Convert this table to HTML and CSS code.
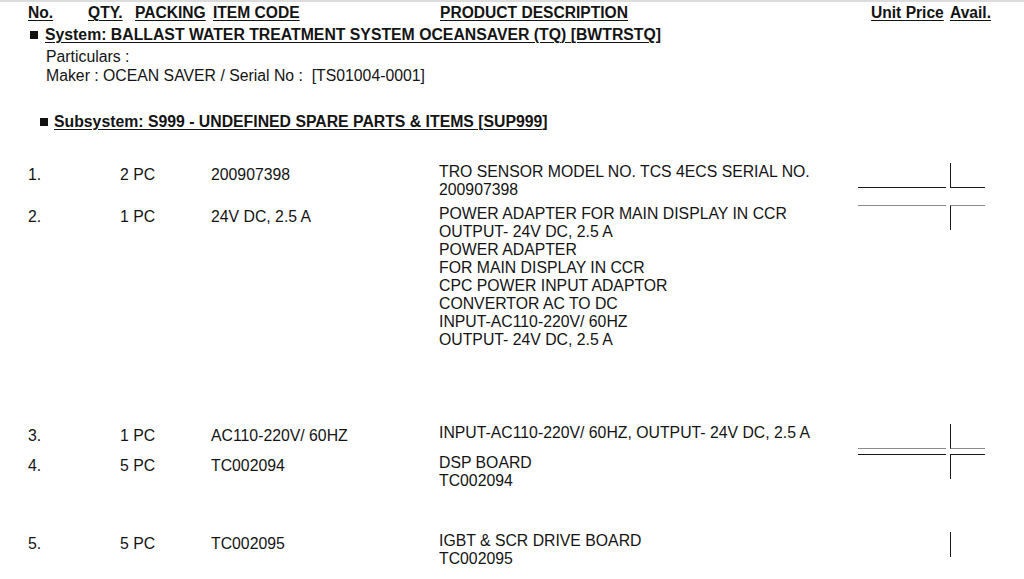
FILE: index.html
```html
<!DOCTYPE html>
<html lang="en">
<head>
<meta charset="utf-8">
<title>Spare Parts List</title>
<link rel="stylesheet" href="styles.css">
</head>
<body>
<div class="page">
  <div class="head">
    <span class="h-no"><u>No.</u></span>
    <span class="h-qty"><u>QTY.</u></span>
    <span class="h-pack"><u>PACKING</u></span>
    <span class="h-code"><u>ITEM CODE</u></span>
    <span class="h-desc"><u>PRODUCT DESCRIPTION</u></span>
    <span class="h-price"><u>Unit Price</u></span>
    <span class="h-avail"><u>Avail.</u></span>
  </div>

  <div class="system"><span class="sq"></span><u>System: BALLAST WATER TREATMENT SYSTEM OCEANSAVER (TQ) [BWTRSTQ]</u></div>
  <div class="particulars">
    <div>Particulars :</div>
    <div>Maker : OCEAN SAVER / Serial No :&nbsp; [TS01004-0001]</div>
  </div>

  <div class="subsystem"><span class="sq"></span><u>Subsystem: S999 - UNDEFINED SPARE PARTS &amp; ITEMS [SUP999]</u></div>

  <div class="items">
    <div class="item item-first">
      <div class="c-no">1.</div>
      <div class="c-qty">2 PC</div>
      <div class="c-code">200907398</div>
      <div class="c-desc">TRO SENSOR MODEL NO. TCS 4ECS SERIAL NO.<br>200907398</div>
      <div class="c-price bb-dark"></div>
      <div class="c-avail bb-dark"></div>
    </div>
    <div class="item gap-4">
      <div class="c-no">2.</div>
      <div class="c-qty">1 PC</div>
      <div class="c-code">24V DC, 2.5 A</div>
      <div class="c-desc">POWER ADAPTER FOR MAIN DISPLAY IN CCR<br>OUTPUT- 24V DC, 2.5 A<br>POWER ADAPTER<br>FOR MAIN DISPLAY IN CCR<br>CPC POWER INPUT ADAPTOR<br>CONVERTOR AC TO DC<br>INPUT-AC110-220V/ 60HZ<br>OUTPUT- 24V DC, 2.5 A</div>
      <div class="c-price bt-gray"></div>
      <div class="c-avail bt-gray"></div>
    </div>
    <div class="item">
      <div class="c-no">3.</div>
      <div class="c-qty">1 PC</div>
      <div class="c-code">AC110-220V/ 60HZ</div>
      <div class="c-desc">INPUT-AC110-220V/ 60HZ, OUTPUT- 24V DC, 2.5 A</div>
      <div class="c-price bb-gray"></div>
      <div class="c-avail bb-gray"></div>
    </div>
    <div class="item gap-2">
      <div class="c-no">4.</div>
      <div class="c-qty">5 PC</div>
      <div class="c-code">TC002094</div>
      <div class="c-desc">DSP BOARD<br>TC002094</div>
      <div class="c-price bt-dark"></div>
      <div class="c-avail bt-dark"></div>
    </div>
    <div class="item">
      <div class="c-no">5.</div>
      <div class="c-qty">5 PC</div>
      <div class="c-code">TC002095</div>
      <div class="c-desc">IGBT &amp; SCR DRIVE BOARD<br>TC002095</div>
      <div class="c-price"></div>
      <div class="c-avail"></div>
    </div>
  </div>
</div>
</body>
</html>
```

FILE: styles.css
```css
html, body {
  margin: 0;
  padding: 0;
  background: #ffffff;
}

body {
  font-family: "Liberation Sans", Arial, sans-serif;
  font-size: 15.8px;
  line-height: 18px;
  color: #141414;
}

.page {
  border-top: 2px solid #dcdcdc;
  width: 1024px;
  height: 577px;
  overflow: hidden;
}

u {
  text-decoration: underline;
  text-decoration-thickness: 1px;
  text-underline-offset: 2px;
}

.head {
  display: flex;
  font-size: 15.6px;
  font-weight: bold;
  margin-top: 2px;
  padding-left: 28px;
  white-space: nowrap;
}
.h-no { width: 60px; }
.h-qty { width: 47px; }
.h-pack { width: 78px; }
.h-code { width: 227px; }
.h-desc { width: 431px; }
.h-price { width: 79px; }

.sq {
  display: inline-block;
  width: 8px;
  height: 8px;
  background: #111;
  margin-right: 7px;
  vertical-align: 1px;
}

.system {
  font-weight: bold;
  margin-top: 4px;
  padding-left: 30px;
  white-space: nowrap;
}

.particulars {
  margin-top: 3px;
  padding-left: 46px;
  line-height: 19px;
}

.subsystem {
  font-weight: bold;
  margin-top: 28px;
  padding-left: 40px;
  white-space: nowrap;
}
.subsystem .sq { margin-right: 6px; }

.items {
  margin-top: 32px;
  padding-left: 28px;
}

.item {
  display: flex;
  align-items: flex-start;
  margin-bottom: 5px;
  white-space: nowrap;
}
.item.item-first { margin-bottom: 6px; }
.item.gap-4 { margin-bottom: 75px; }
.item.gap-2 { margin-bottom: 42px; }

.c-no { width: 92px; padding-top: 3px; }
.c-qty { width: 91px; padding-top: 3px; }
.c-code { width: 228px; padding-top: 3px; }
.c-desc { width: 419px; }

.c-price {
  width: 88px;
  height: 25px;
  box-sizing: border-box;
}
.c-avail {
  width: 35px;
  height: 25px;
  margin-left: 4px;
  box-sizing: border-box;
  border-left: 1px solid #1a1a1a;
}

.bb-dark { border-bottom: 1px solid #1a1a1a; }
.bt-dark { border-top: 1px solid #1a1a1a; }
.bb-gray { border-bottom: 1px solid #8a8a8a; }
.bt-gray { border-top: 1px solid #8a8a8a; }
```
